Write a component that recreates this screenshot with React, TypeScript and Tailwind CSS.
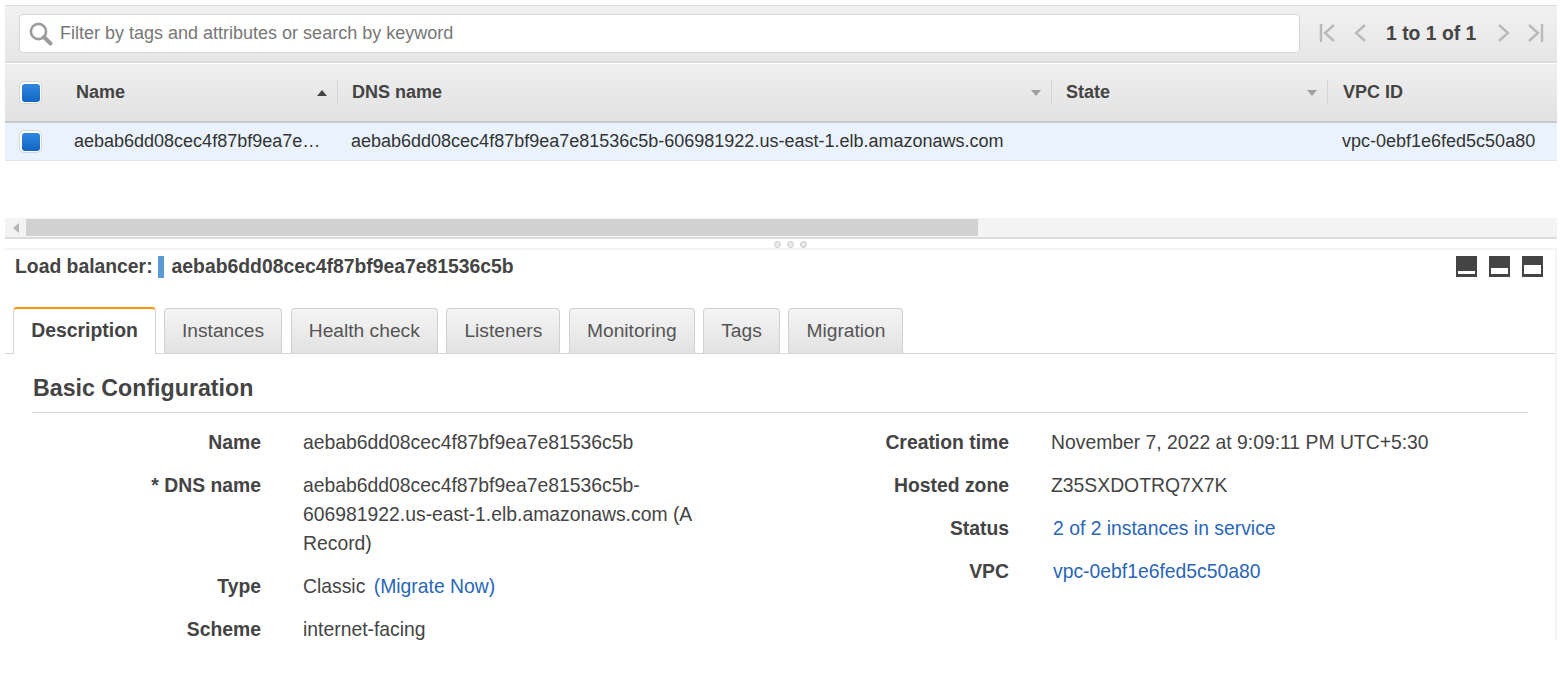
const Check = () => (
  <span className="flex h-[23px] w-[23px] items-center justify-end rounded-[5px] border border-[#d6d6d6] bg-white pr-px">
    <span className="h-[18px] w-[18px] rounded-[3px] bg-gradient-to-b from-[#2f86df] to-[#1266c4]" />
  </span>
);

const Sep = () => <span className="h-[25px] w-px bg-[#d4d4d4]" />;

const Caret = ({ up }: { up?: boolean }) => (
  <svg width="10" height="6" viewBox="0 0 10 6" className={up ? "text-[#444]" : "text-[#a0a0a0]"}>
    <path d={up ? "M0 6 L5 0 L10 6 Z" : "M0 0 L5 6 L10 0 Z"} fill="currentColor" />
  </svg>
);

const Pager = ({ d, w = 14 }: { d: string; w?: number }) => (
  <svg width={w} height="20" viewBox={`0 0 ${w} 20`} fill="none" stroke="#b9b9b9" strokeWidth="2.4">
    <path d={d} />
  </svg>
);

const HeadCell = ({ label, caret, up, cls }: { label: string; caret?: boolean; up?: boolean; cls: string }) => (
  <div className={`flex items-center ${cls}`}>
    <span className="text-[18px] font-bold text-[#444]">{label}</span>
    {caret && (
      <span className="ml-auto mr-[10px]">
        <Caret up={up} />
      </span>
    )}
  </div>
);

const Tab = ({ label, active }: { label: string; active?: boolean }) =>
  active ? (
    <div className="relative z-10 -mb-px -mr-[0.7px] flex h-[47px] w-[143px] items-center justify-center rounded-t-[4px] border border-b-0 border-t-2 border-[#d5d5d5] border-t-[#f90] bg-white pb-px text-[19.4px] font-bold text-[#444]">
      {label}
    </div>
  ) : (
    <div className="flex h-[45px] items-center justify-center rounded-t-[4px] border border-b-0 border-[#d0d0d0] bg-gradient-to-b from-[#f5f5f5] to-[#e2e2e2] px-[17px] text-[19.2px] text-[#555]">
      {label}
    </div>
  );

const Row = ({ label, children, cols }: { label: string; children: React.ReactNode; cols: string }) => (
  <div className={`grid ${cols} gap-x-[42px] pb-[14px] text-[19.35px] leading-[29px]`}>
    <div className="text-right font-bold text-[#444]">{label}</div>
    <div className="text-[#444]">{children}</div>
  </div>
);

const Link = ({ children }: { children: React.ReactNode }) => <span className="text-[#2a66b5]">{children}</span>;

const ViewIcon = ({ h }: { h: number }) => (
  <span className="flex h-[21px] w-[21px] flex-col justify-end bg-[#444] p-[2px] pb-[3px]">
    <span className="block w-full bg-white" style={{ height: h }} />
  </span>
);

export default function App() {
  return (
    <div className="h-[683px] w-[1560px] overflow-hidden bg-white pt-[5px] pl-[5px] pr-[3px] font-['Liberation_Sans',Arial,sans-serif]">
      {/* Filter bar */}
      <div className="flex h-[58px] items-center border-t border-b-2 border-[#dcdcdc] bg-gradient-to-b from-[#f1f1f1] to-[#e6e6e6] pl-[14px]">
        <div className="flex h-[39px] w-[1281px] items-center rounded-[4px] border border-[#d6d6d6] bg-white pl-[8px]">
          <svg width="25" height="25" viewBox="0 0 25 25" fill="none" className="mr-[7px] shrink-0">
            <circle cx="10.5" cy="10.5" r="7.6" stroke="#9c9c9c" strokeWidth="2.6" />
            <path d="M16 16 L22.5 22.5" stroke="#9c9c9c" strokeWidth="4" strokeLinecap="round" />
          </svg>
          <span className="text-[18px] text-[#777]">Filter by tags and attributes or search by keyword</span>
        </div>
        <div className="ml-[19px] flex items-center">
          <Pager w={17} d="M2 1 V19 M15 2 L6 10 L15 18" />
          <span className="w-[17px]" />
          <Pager d="M12 2 L3 10 L12 18" />
          <span className="ml-[19px] w-[90px] text-[19.35px] font-bold text-[#444] whitespace-nowrap">1 to 1 of 1</span>
          <span className="w-[21px]" />
          <Pager d="M2 2 L11 10 L2 18" />
          <span className="w-[16px]" />
          <Pager w={17} d="M2 2 L11 10 L2 18 M15 1 V19" />
        </div>
      </div>

      {/* Table header */}
      <div className="mt-px flex h-[59px] items-center border-b-2 border-[#c9c9c9] bg-gradient-to-b from-[#efefef] to-[#e2e2e2]">
        <div className="flex w-[55px] shrink-0 items-center pl-[14px]">
          <Check />
          <span className="ml-auto">
            <Sep />
          </span>
        </div>
        <HeadCell label="Name" caret up cls="w-[277px] pl-[16px]" />
        <Sep />
        <HeadCell label="DNS name" caret cls="w-[713px] pl-[14px]" />
        <Sep />
        <HeadCell label="State" caret cls="w-[275px] pl-[14px]" />
        <Sep />
        <HeadCell label="VPC ID" cls="pl-[15px]" />
      </div>

      {/* Table row */}
      <div className="flex h-[38px] items-center border-b border-[#dfe6ee] bg-[#eaf3fd] text-[18px] text-[#333]">
        <div className="flex w-[55px] shrink-0 pl-[14px]">
          <Check />
        </div>
        <div className="w-[277px] pl-[14px] whitespace-nowrap">aebab6dd08cec4f87bf9ea7e…</div>
        <div className="w-[991px] pl-[14px] whitespace-nowrap">aebab6dd08cec4f87bf9ea7e81536c5b-606981922.us-east-1.elb.amazonaws.com</div>
        <div className="pl-[14px] whitespace-nowrap">vpc-0ebf1e6fed5c50a80</div>
      </div>

      {/* Scrollbar */}
      <div className="mt-[57px] flex h-[19px] items-center bg-[#f3f3f3]">
        <div className="flex w-[21px] justify-center">
          <svg width="6" height="10" viewBox="0 0 6 10">
            <path d="M6 0 L0 5 L6 10 Z" fill="#b5b5b5" />
          </svg>
        </div>
        <div className="h-[17px] w-[952px] bg-[#d1d1d1]" />
      </div>
      <div className="h-[2px] bg-[#dcdcdc]" />

      {/* Drag handle */}
      <div className="flex h-[9px] items-center justify-center gap-[6px] pl-[18px] pt-[1px]">
        <span className="h-[7px] w-[7px] rounded-full border border-[#c8c8c8] bg-[#e9e9e9]" />
        <span className="h-[7px] w-[7px] rounded-full border border-[#c8c8c8] bg-[#e9e9e9]" />
        <span className="h-[7px] w-[7px] rounded-full border border-[#c8c8c8] bg-[#e9e9e9]" />
      </div>

      {/* Detail panel */}
      <div className="h-[392px] border-t-2 border-r-2 border-[#f3f3f3]">
        <div className="flex h-[35px] items-center pb-[2px] pl-[10px] pr-[12px]">
          <span className="text-[19.35px] font-bold text-[#444]">Load balancer:</span>
          <span className="ml-[5px] mr-[8px] h-[22px] w-[6px] bg-[#5b9bd5]" />
          <span className="text-[19.35px] font-bold text-[#444]">aebab6dd08cec4f87bf9ea7e81536c5b</span>
          <div className="ml-auto flex gap-[12px]">
            <ViewIcon h={3} />
            <ViewIcon h={6} />
            <ViewIcon h={9} />
          </div>
        </div>

        {/* Tabs */}
        <div className="mt-[22px] flex h-[47px] items-end gap-[8.7px] border-b border-[#d5d5d5] pl-[8px]">
          <Tab label="Description" active />
          <Tab label="Instances" />
          <Tab label="Health check" />
          <Tab label="Listeners" />
          <Tab label="Monitoring" />
          <Tab label="Tags" />
          <Tab label="Migration" />
        </div>

        {/* Section */}
        <div className="px-[27px]">
          <h2 className="flex h-[59px] items-center border-b border-[#d5d5d5] pt-[11px] pl-px text-[23.2px] font-bold text-[#444]">
            Basic Configuration
          </h2>
          <div className="mt-[15px] flex">
            <div className="w-[706px] shrink-0">
              <Row label="Name" cols="grid-cols-[229px_1fr]">aebab6dd08cec4f87bf9ea7e81536c5b</Row>
              <Row label="* DNS name" cols="grid-cols-[229px_1fr]">
                aebab6dd08cec4f87bf9ea7e81536c5b-
                <br />
                606981922.us-east-1.elb.amazonaws.com (A
                <br />
                Record)
              </Row>
              <Row label="Type" cols="grid-cols-[229px_1fr]">
                Classic <span className="ml-[3px]"><Link>(Migrate Now)</Link></span>
              </Row>
              <Row label="Scheme" cols="grid-cols-[229px_1fr]">internet-facing</Row>
            </div>
            <div className="flex-1">
              <Row label="Creation time" cols="grid-cols-[271px_1fr]">November 7, 2022 at 9:09:11 PM UTC+5:30</Row>
              <Row label="Hosted zone" cols="grid-cols-[271px_1fr]">Z35SXDOTRQ7X7K</Row>
              <Row label="Status" cols="grid-cols-[271px_1fr]"><span className="ml-[2px]"><Link>2 of 2 instances in service</Link></span></Row>
              <Row label="VPC" cols="grid-cols-[271px_1fr]"><span className="ml-[2px]"><Link>vpc-0ebf1e6fed5c50a80</Link></span></Row>
            </div>
          </div>
        </div>
      </div>
    </div>
  );
}
